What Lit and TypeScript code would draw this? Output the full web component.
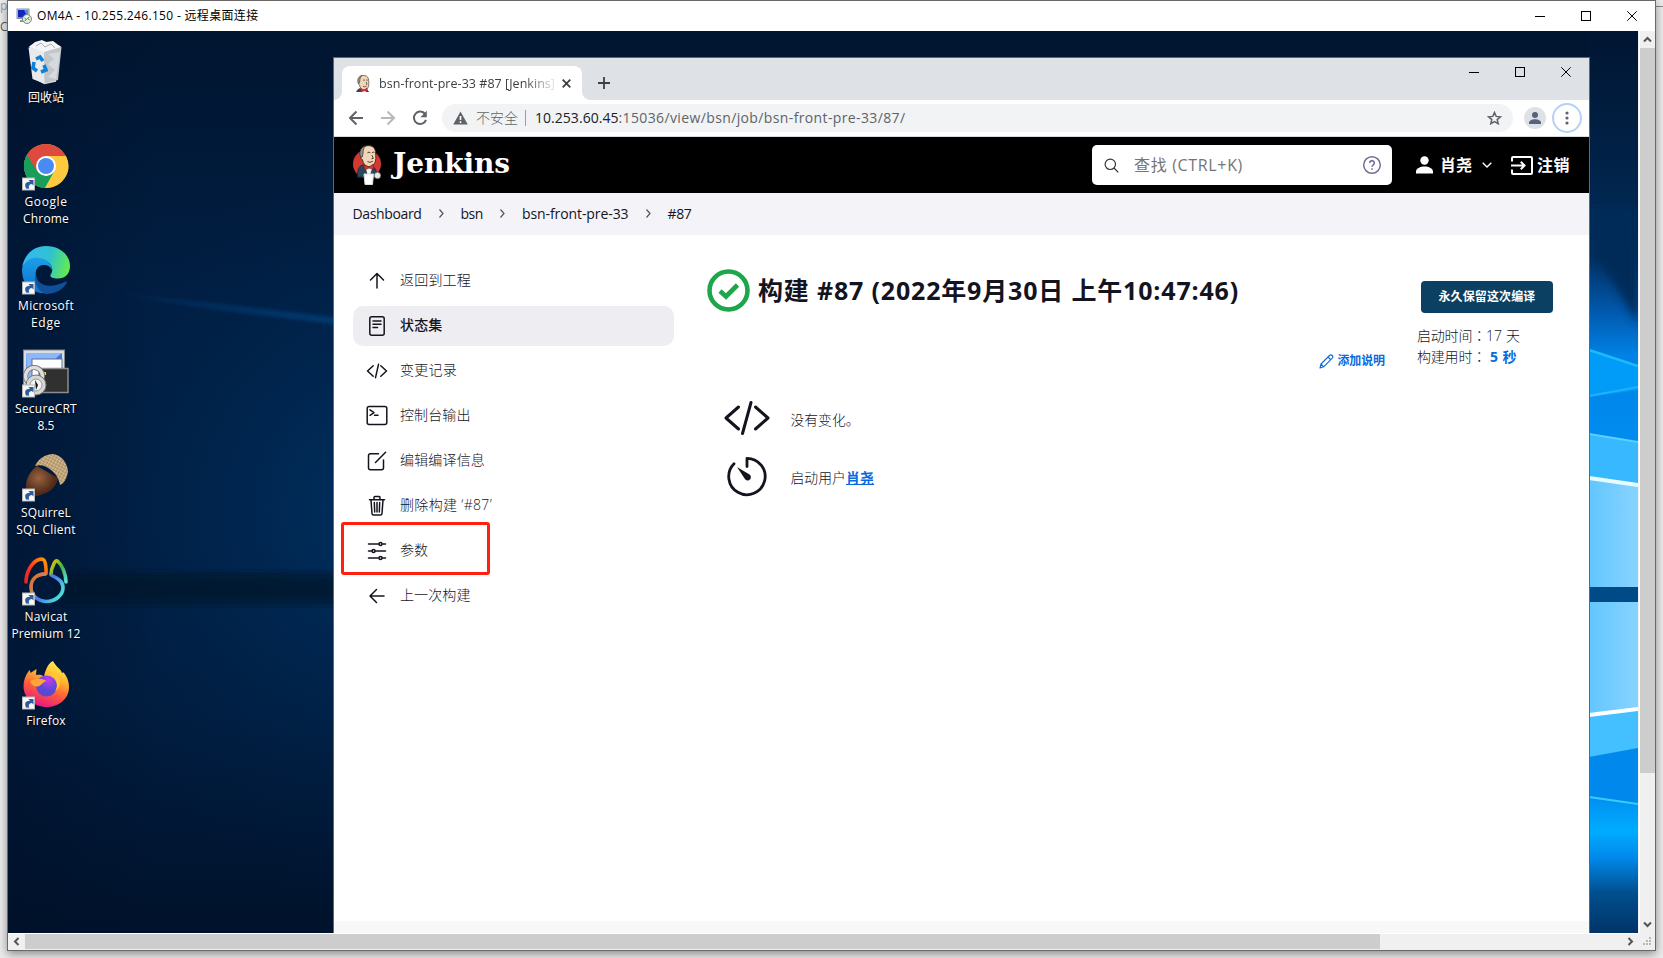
import { LitElement, html, svg, css } from "lit";

/** Single-line label whose letter spacing is tracked so that it spans a given width. */
class TrackedText extends LitElement {
  static properties = { text: {}, w: { type: Number } };
  declare text: string;
  declare w: number;
  static styles = css`
    :host { display: inline-block; white-space: pre; flex: none; text-decoration: inherit; }
    .run { display: inline-block; text-decoration: inherit; }
  `;
  updated() {
    const run = this.renderRoot.querySelector(".run") as HTMLElement;
    run.style.letterSpacing = "0px";
    const natural = run.getBoundingClientRect().width;
    const count = Array.from(this.text).length;
    const gap = (this.w - natural) / count;
    run.style.letterSpacing = `${gap}px`;
  }
  render() {
    return html`<span class="run">${this.text}</span>`;
  }
}
customElements.define("tracked-text", TrackedText);

const t = (text: string, w: number) => html`<tracked-text .text=${text} .w=${w}></tracked-text>`;

const butler = svg`
  <path d="M9 5.500C10 1.500 14 .3 18 .8c4.500.5 6.500 4 6.500 8 .5 4.500.5 8-1 11-1.500 2.600-4 4-6.500 3.700-4-.5-6.500-3.500-7-7.500-1.600-.6-2.400-2.500-1.800-4z" fill="#f0d6b7" stroke="#3a2d28" stroke-width="1"/>
  <path d="M8 13C5.500 8 8 2 14 .8 10.500 3 11 6.500 10.500 9.500L9.800 13z" fill="#9b938c" stroke="#3a2d28" stroke-width=".8"/>
  <path d="M15.500 8.500q1.800-1.500 3.300 0M20.500 8.300q1.600-1.300 2.900.2M20.500 11l1.500 3.500-2 .5M15.500 18q3 1.800 6-.3" stroke="#3a2d28" stroke-width="1" fill="none"/>
  <path d="M4.500 35C4 28 5.500 22.500 11 21.500l5 5 5-3c4 1.500 5 6 4.600 11.500z" fill="#29485c" stroke="#16222c" stroke-width=".8"/>
  <path d="M13 23.500l4 13 4-12z" fill="#f5f5f5"/>
  <path d="M11.500 21.500l5 2.600 5.500-3.300.8 5.600-5.600-1.300-5 2.200z" fill="#d33833" stroke="#701919" stroke-width=".7"/>`;

const shortcut = svg`
  <rect x="0.500" y="36" width="12" height="12" fill="#f7f7f7" stroke="#b9b9b9"/>
  <path d="M4 46.500c-2-5 0-7 4-6.500l-1.500-2h5v5.500l-1.600-1.400c-3 .3-3.400 2-2.700 4.600z" fill="#2c5c9e"/>`;

// Desktop glyphs share a 48x50 box.
const bin = svg`<g transform="translate(2 2)">
  <path d="M5.500 6.500 11 3l8-2 9 2 10 3.500-2.800 8L33 43 21 45.500 10 40z" fill="#d9dcdf" transform="scale(.97)"/>
  <path d="M4.500 7.500l15.500 4L20.500 43.500 8.500 39z" fill="#e8eaec"/>
  <path d="M20 11.500L37.500 7l-3.500 33-13.500 3.500z" fill="#c2c6ca"/>
  <path d="M24 14l6 5-6 5 7 6-7 7 8 2 4-27z" fill="#d7dadd"/>
  <path d="M5 7l6-5 7-2 4 2 7-1 8 6-17 5z" fill="#f4f5f6"/>
  <path d="M12 6l5-3 4 4 6-3 4 4" stroke="#aab0b5" fill="none"/>
  <path d="M12 19l4-2 3 4M20 25l2 5-5 2M13 31l-4-3 1-6" fill="none" stroke="#1081d8" stroke-width="3.600"/></g>`;
const chrome = svg`
  <circle cx="24" cy="24" r="22" fill="#fdc93f"/>
  <path d="M24 24 23 46A22 22 0 0 1 4.950 13z" fill="#189d5b"/>
  <path d="M4.950 13A22 22 0 0 1 43.050 13L44 14H24l-9.500 14.500z" fill="#dc4b3e"/>
  <path d="M4.950 13l9.500 16 9.500 5 8.800-5L23 46A22 22 0 0 1 4.950 13z" fill="#189d5b"/>
  <path d="M33 14H44A22 22 0 0 1 23 46l9.500-17z" fill="#fdc93f"/>
  <circle cx="24" cy="24" r="10" fill="#fff"/><circle cx="24" cy="24" r="8" fill="#4a8af4"/>`;
const edge = svg`
  <defs>
    <linearGradient id="ea" x1="0" y1=".4" x2="1" y2=".6"><stop offset="0" stop-color="#35b8f5"/><stop offset=".55" stop-color="#2fc3cd"/><stop offset="1" stop-color="#66eb4c"/></linearGradient>
    <linearGradient id="eb" x1="0" y1="0" x2="0" y2="1"><stop offset="0" stop-color="#1ba0e6"/><stop offset="1" stop-color="#0f6fd0"/></linearGradient>
  </defs>
  <path d="M0 22C2 8 12 0 24 0c14 0 24 9 24 20 0 8-5 12.500-12 12.500-6 0-9-2-7-4.500C33 22 27 13 17 13 9 13 2 17 0 22z" fill="url(#ea)"/>
  <path d="M0 23C3 13 12 10 18 12c8 1.500 12 7 12 12-2-4-5-5-8-5-7 0-9 6-8 11 1.500 9 9 15 18 14-5 3-11 4-16 2.500C6 45 0 36 0 23z" fill="url(#eb)"/>
  <path d="M14 27c0 9 7 14 17 12.500 6-.8 9-2.500 13-4 .8-.2 1.200.3.800 1C41 44 33 48 24 48 16 46 11 36 14 27z" fill="#10509b"/>`;
const crt = svg`
  <rect x="1.500" y="1" width="41" height="37" fill="#d9dce0" stroke="#858585"/>
  <rect x="4" y="4" width="36" height="32" fill="#3d78e0"/><path d="M4 4h36L5 34z" fill="#8db8f8"/>
  <rect x="10" y="10" width="30" height="24" fill="#fff" stroke="#5a6f96"/>
  <rect x="17" y="19.500" width="29" height="24" fill="#303030" stroke="#8d8d8d" stroke-width="1.500"/>
  <rect x="22" y="23" width="2" height="3" fill="#e8e020"/>
  <circle cx="12" cy="27" r="8.500" fill="none" stroke="#6d6d6d" stroke-width="5"/><circle cx="12" cy="27" r="8.500" fill="none" stroke="#dedede" stroke-width="3.500"/>
  <circle cx="14" cy="36" r="10" fill="#d6d6d6" stroke="#777"/><circle cx="14" cy="36" r="6" fill="#f2f2f2" stroke="#999"/><path d="M13 31l3 5-2 5z" fill="#111"/>`;
const acorn = svg`
  <defs><radialGradient id="ac" cx=".4" cy=".4"><stop offset="0" stop-color="#9a6240"/><stop offset="1" stop-color="#4f2c1a"/></radialGradient>
  <pattern id="cap" width="3" height="3" patternUnits="userSpaceOnUse" patternTransform="rotate(28)"><rect width="3" height="3" fill="#bfa277"/><rect width="1.500" height="1.500" fill="#dcc69c"/><rect x="1.500" y="1.500" width="1" height="1" fill="#84684a"/></pattern></defs>
  <g transform="translate(0 1)">
  <path d="M15 12c-7 5-12 14-11 23 1 7 9 9 17 5 8-2 14-9 15-16z" fill="url(#ac)"/>
  <path d="M13 12C16 5 23 0 31 0c8 1 14 8 15 17-.5 6-4 13-8 14-1-7-5-12-9-15-5-4-10-6-16-4z" fill="url(#cap)"/></g>`;
const navicat = svg`
  <defs>
    <linearGradient id="na" x1="0" y1="1" x2="1" y2="0"><stop offset="0" stop-color="#e8281c"/><stop offset=".4" stop-color="#ff3020"/><stop offset="1" stop-color="#ff9c00"/></linearGradient>
    <linearGradient id="nb" x1="0" y1="0" x2="1" y2="1"><stop offset="0" stop-color="#f2c500"/><stop offset=".5" stop-color="#3fb54a"/><stop offset="1" stop-color="#5ce0e0"/></linearGradient>
    <linearGradient id="nc" x1="0" y1="0" x2="1" y2=".6"><stop offset="0" stop-color="#e86a10"/><stop offset=".35" stop-color="#b88a70"/><stop offset=".55" stop-color="#4878f0"/><stop offset="1" stop-color="#4cd8d8"/></linearGradient>
  </defs>
  <g fill="none" stroke-width="3.600" stroke-linecap="round" stroke-linejoin="round">
    <path d="M4 25C4 15 10 5 17 2.500c5-1.500 6 1.500 6.500 5 .5 4 .8 6 .5 9-2 .8-5 .5-8 2" stroke="url(#na)"/>
    <path d="M44 25C44 17 40 8 36 4.500c-2-1.500-3 0-4 2-2 4-3 8-3 11" stroke="url(#nb)"/>
    <path d="M23 17c-8 0-14 5-14 13 0 8 6 14 15 14.500 9 0 17-6 17-14 0-6-5-9-11-12" stroke="url(#nc)"/>
  </g>`;
const firefox = svg`
  <defs>
    <linearGradient id="fa" x1=".75" y1="0" x2=".35" y2="1"><stop offset="0" stop-color="#fff44f"/><stop offset=".35" stop-color="#ffb52e"/><stop offset=".65" stop-color="#ff5a3c"/><stop offset="1" stop-color="#e31587"/></linearGradient>
    <radialGradient id="fb" cx=".6" cy=".2"><stop offset="0" stop-color="#c43af0"/><stop offset="1" stop-color="#5b49d6"/></radialGradient>
  </defs>
  <path d="M31 0c3 6 8 8 9 12 2-1 2 0 2 0 4 5 5 10 5 14 0 12-10 20-22.500 20S1.500 37 1.500 25c0-6 2-11 6-16 1 2 1 3 1 3l6-4-.5 6c4-.5 6 0 8 1.500C23 11 25 3 31 0z" fill="url(#fa)"/>
  <circle cx="24.500" cy="25" r="10.500" fill="url(#fb)"/>
  <path d="M8 20c6-3 12-3 16.500 0-4 1-5 5-9 5.500-4 0-6-2-7.500-5.500z" fill="#ffa436"/>
  <path d="M28 14c7 3 9 11 5 16 6-3 7-12 1-17z" fill="#ffc637"/>`;

const shortcuts = [
  { glyph: bin, arrow: false, lines: [["回收站", 36]] },
  { glyph: chrome, arrow: true, lines: [["Google", 43], ["Chrome", 46]] },
  { glyph: edge, arrow: true, lines: [["Microsoft", 56], ["Edge", 30]] },
  { glyph: crt, arrow: true, lines: [["SecureCRT", 62], ["8.5", 17]] },
  { glyph: acorn, arrow: true, lines: [["SQuirreL", 50], ["SQL Client", 59.5]] },
  { glyph: navicat, arrow: true, lines: [["Navicat", 43], ["Premium 12", 69]] },
  { glyph: firefox, arrow: true, lines: [["Firefox", 39.5]] },
] as const;

// Side-panel glyphs are drawn in a 24x24 box.
const code = svg`<path d="M8.200 6.800 2.500 12l5.700 5.200M15.800 6.800l5.700 5.200-5.700 5.200M13.500 5.300l-3 13.400"/>`;
const tasks = [
  { text: "返回到工程", w: 71, icon: svg`<path d="M12 19V5M5.500 11 12 4.500l6.500 6.500"/>` },
  { text: "状态集", w: 42.5, active: true, icon: svg`<rect x="4.800" y="2.800" width="14.400" height="18.400" rx="2"/><path d="M8 7h8M8 10.300h8M8 13.500h4.500"/>` },
  { text: "变更记录", w: 57, icon: code },
  { text: "控制台输出", w: 70.5, icon: svg`<rect x="2.200" y="2.600" width="19.600" height="18" rx="2"/><path d="M5 5.800l4 2.800-4 2.700M9.500 11.300h3.500"/>` },
  { text: "编辑编译信息", w: 85, icon: svg`<path d="M13.500 4.700H5.500a2 2 0 0 0-2 2v12a2 2 0 0 0 2 2h11a2 2 0 0 0 2-2V11M10.500 13.500 20.600 3.200"/>` },
  { text: "删除构建 ‘#87’", w: 92, icon: svg`<path d="M4.500 5.800h15M9 5.500V3.600a1 1 0 0 1 1-1h4a1 1 0 0 1 1 1v1.900M6 6l1 13.500a1.600 1.600 0 0 0 1.600 1.500h6.800a1.600 1.600 0 0 0 1.600-1.500L18 6M9.300 8.500l.4 9.500M12 8.500V18M14.700 8.500l-.4 9.500"/>` },
  { text: "参数", w: 28, icon: svg`<path d="M3.500 5h10.200M17.300 5H20.500M3.500 12h3.200M10.300 12h10.200M3.500 19h10.200M17.300 19H20.500"/><circle cx="15.500" cy="5" r="1.500"/><circle cx="8.500" cy="12" r="1.500"/><circle cx="15.500" cy="19" r="1.500"/>` },
  { text: "上一次构建", w: 70.5, icon: svg`<path d="M19 12H5.500M11.500 5.500 5 12l6.500 6.500"/>` },
];

const minimize = svg`<path d="M0 5.500h10"/>`;
const maximize = svg`<rect x=".5" y=".5" width="9" height="9"/>`;
const close = svg`<path d="M.3.300l9.400 9.400M9.700.300.300 9.700"/>`;

class AppRoot extends LitElement {
  static styles = css`
    :host {
      display: block; position: relative; width: 1663px; height: 958px; overflow: hidden;
      background: #ececec; color: #14141f;
      font: 14px/20px "Open Sans", "Noto Sans CJK SC", sans-serif;
    }
    * { box-sizing: border-box; }
    svg { display: block; flex: none; }
    .behind { position: absolute; left: 0; top: -5px; font-size: 12px; line-height: 21px; color: #555; }
    .behind .pale { color: #8fa0b8; }
    .behind-edge { position: absolute; right: 0; top: 6px; width: 8px; height: 1px; background: #888; }
    .remote {
      position: absolute; left: 7px; top: 0; width: 1649px; height: 951px;
      display: grid; grid-template: 30px 902px 17px / 1631px 16px;
      background: #f0f0f0; border: 1px solid #6c6868; box-shadow: 0 3px 9px rgba(0,0,0,.42);
    }
    .titlebar { grid-column: 1 / 3; display: flex; align-items: center; background: #fff; color: #000; font-size: 12px; padding: 0 13px 0 8px; gap: 5px; }
    .grow { flex: 1; }
    .controls { display: flex; align-items: center; gap: 36px; fill: none; stroke: #000; stroke-width: 1; }
    .titlebar .controls { padding-right: 5px; padding-bottom: 1px; }
    .desktop { position: relative; overflow: hidden; width: 1630px; height: 902px; background: #001a3c; }
    .wall { position: absolute; inset: 0; }
    .icons { position: relative; display: grid; grid-auto-rows: 103.800px; width: 76px; padding-top: 7px; }
    .shortcut { display: flex; flex-direction: column; align-items: center; color: #fff; font-size: 12px; line-height: 17px; text-shadow: 0 1px 2px #000; gap: 1px; }
    .names { display: flex; flex-direction: column; align-items: center; }
    .vbar { display: flex; flex-direction: column; align-items: center; justify-content: space-between; border-left: 1px solid #fff; }
    .vthumb { width: 15px; height: 725px; background: #cdcdcd; }
    .vbar .arrow { height: 17px; }
    .hbar { display: flex; align-items: flex-start; border-top: 1px solid #fff; }
    .hthumb { width: 1355px; height: 15px; background: #cdcdcd; }
    .arrow { display: grid; place-items: center; width: 17px; height: 15px; fill: none; stroke: #555; stroke-width: 2; }
    .rest { flex: none; height: 143px; }
    .browser { position: absolute; left: 325px; top: 26px; width: 1257px; height: 880px; border: 1px solid #1e78c4; background: #fff; display: flex; flex-direction: column; }
    .strip { height: 42px; flex: none; background: #dee1e6; display: flex; padding: 0 18px 0 8px; }
    .tab { position: relative; margin-top: 8px; width: 240px; height: 34px; border-radius: 8px 8px 0 0; background: #fff; display: flex; align-items: center; padding: 0 11px 0 12px; font-size: 12.500px; color: #3c4043; }
    .tab::before, .tab::after { content: ""; position: absolute; bottom: 0; width: 8px; height: 8px; }
    .tab::before { left: -8px; background: radial-gradient(circle at 0 0, #dee1e6 7.600px, #fff 8px); }
    .tab::after { right: -8px; background: radial-gradient(circle at 100% 0, #dee1e6 7.600px, #fff 8px); }
    .fade { margin-left: 7px; padding-top: 1px; width: 175px; overflow: hidden; -webkit-mask-image: linear-gradient(90deg, #000 145px, transparent 180px); }
    .line { fill: none; stroke: #3c4043; stroke-width: 1.800; }
    .plus { margin: 19px 0 0 16px; }
    .strip .controls { height: 28px; gap: 36px; }
    .toolbar { height: 37px; flex: none; display: flex; align-items: center; border-bottom: 1px solid #dadce0; padding: 0 7px 0 14px; }
    .nav { display: flex; gap: 16px; fill: none; stroke: #5f6368; stroke-width: 2; }
    .off { stroke: #b6b9bc; }
    .omnibox { margin-left: 14px; width: 1072px; height: 28px; border-radius: 14px; background: #f1f3f4; display: flex; align-items: center; padding: 0 11px; color: #5f6368; font-size: 14px; }
    .sep { width: 1px; height: 16px; background: #9a9ea3; margin: 0 9px 0 7px; }
    .unsafe { margin-left: 8px; font-weight: 300; }
    .host { color: #202124; }
    .avatar { margin-left: 11px; width: 22px; height: 22px; border-radius: 50%; background: #dee1e6; display: grid; place-items: center; }
    .menu { margin-left: 6px; width: 30px; height: 30px; border-radius: 50%; border: 2px solid #b4d1f8; display: grid; place-items: center; }
    .header { height: 56px; flex: none; background: #000; display: flex; align-items: center; padding: 0 19px 0 17px; color: #fff; font-weight: 700; font-size: 16px; }
    .brand { font: 700 28px/40px "DejaVu Serif", serif; margin: -3px 0 0 11px; }
    .search { width: 300px; height: 40px; border-radius: 5px; background: #fff; color: #757575; font-weight: 400; display: flex; align-items: center; padding: 0 10px 0 12px; }
    .search tracked-text { margin-left: 15px; }
    .user { margin: 0 10px 0 7px; }
    .person { margin-left: 24px; }
    .logout { margin: 0 4px 0 19px; }
    .crumbs { height: 42px; flex: none; background: #f3f3f8; display: flex; align-items: center; gap: 17px; padding: 0 0 1px 18.500px; }
    .crumbs svg { fill: none; stroke: #555; stroke-width: 1.200; }
    .page { flex: 1; display: flex; }
    .light { font-weight: 300; }
    .tasks { width: 340px; padding: 26px 0 0 19px; display: flex; flex-direction: column; gap: 5px; }
    .task { width: 321px; height: 40px; border-radius: 10px; display: flex; align-items: center; gap: 11px; padding-left: 12px; fill: none; stroke: #14141f; stroke-width: 1.500; stroke-linecap: round; stroke-linejoin: round; }
    .task tracked-text { padding-bottom: 2px; }
    .active { background: #eeedf2; font-weight: 500; }
    .main { width: 650px; padding: 33px 0 0 33px; }
    h1 { margin: 0; display: flex; align-items: center; gap: 8px; height: 44px; font-size: 25px; line-height: 44px; font-weight: 700; }
    h1 tracked-text { margin-top: -1px; }
    .describe { display: flex; justify-content: flex-end; align-items: center; gap: 4px; height: 20px; margin-top: 39px; color: #0b6adb; font-size: 12px; font-weight: 700; width: 678px; }
    .facts { display: grid; grid-template-columns: 44px auto; column-gap: 22.500px; align-items: center; grid-auto-rows: 58px; justify-content: start; margin: 18px 0 0 17px; font-size: 13.800px; }
    .facts svg { fill: none; stroke: #14141f; stroke-linecap: round; stroke-linejoin: round; }
    .fact { display: flex; padding-top: 3px; }
    .link { color: #0b6adb; font-weight: 700; text-decoration: underline; }
    .aside { padding: 46px 0 0 93px; display: flex; flex-direction: column; }
    .keep { width: 132px; height: 32px; margin: 0 0 12px 4px; border: 0; border-radius: 4px; background: #0b4062; color: #fff; font: 700 12px/32px "Open Sans", "Noto Sans CJK SC", sans-serif; padding: 0; text-align: center; }
    .stat { display: flex; height: 21px; line-height: 21px; font-family: "Open Sans", "Noto Sans CJK TC", sans-serif; }
    .blue { color: #0b6adb; font-weight: 700; margin-left: 4px; }
    .footer { height: 22px; flex: none; background: #f8f8f8; margin-bottom: -7px; }
    .callout { position: absolute; left: 7px; top: 464px; width: 149px; height: 53px; border: 3px solid #ff2010; border-radius: 3px; }
  `;

  controls() {
    return html`<div class="controls">${[minimize, maximize, close].map((g) => html`<svg width="10" height="10">${g}</svg>`)}</div>`;
  }

  wallpaper() {
    return html`<svg class="wall" width="1630" height="902" viewBox="8 31 1630 902">
      <defs>
        <radialGradient id="glow" gradientUnits="userSpaceOnUse" cx="400" cy="510" r="400"><stop offset="0" stop-color="#003263"/><stop offset=".5" stop-color="#00264f" stop-opacity=".65"/><stop offset="1" stop-color="#001a3a" stop-opacity="0"/></radialGradient>
        <linearGradient id="base" x1="0" y1="0" x2="0" y2="1"><stop offset="0" stop-color="#001530"/><stop offset=".3" stop-color="#001f44"/><stop offset=".55" stop-color="#001f45"/><stop offset=".75" stop-color="#001d40"/><stop offset="1" stop-color="#00122b"/></linearGradient>
        <linearGradient id="left" x1="0" y1="0" x2="1" y2="0"><stop offset="0" stop-color="#000f28" stop-opacity=".45"/><stop offset="1" stop-color="#001028" stop-opacity="0"/></linearGradient>
        <linearGradient id="beam" x1="0" y1="0" x2="1" y2="0"><stop offset="0" stop-color="#00407c" stop-opacity="0"/><stop offset="1" stop-color="#00407c" stop-opacity=".75"/></linearGradient>
        <linearGradient id="sky" x1="0" y1="0" x2="0" y2="1"><stop offset="0" stop-color="#001632"/><stop offset=".15" stop-color="#002248"/><stop offset=".25" stop-color="#003060"/><stop offset=".31" stop-color="#0058ac"/><stop offset=".36" stop-color="#0082e6"/><stop offset=".5" stop-color="#0092f4"/></linearGradient>
        <linearGradient id="fall" x1="0" y1="0" x2="0" y2="1"><stop offset="0" stop-color="#0090f0"/><stop offset=".25" stop-color="#00acff"/><stop offset=".45" stop-color="#0088ea"/><stop offset=".7" stop-color="#00508f"/><stop offset="1" stop-color="#003468"/></linearGradient>
        <linearGradient id="pane" x1="0" y1="0" x2="1" y2="0"><stop offset="0" stop-color="#62c6ff"/><stop offset="1" stop-color="#88d3ff"/></linearGradient>
        <filter id="soft"><feGaussianBlur stdDeviation="5"/></filter>
        <filter id="haze" x="-.1" y="-1" width="1.200" height="3"><feGaussianBlur stdDeviation="1.500"/></filter>
      </defs>
      <rect x="8" y="31" width="1630" height="902" fill="url(#base)"/>
      <rect x="8" y="31" width="500" height="902" fill="url(#glow)"/>
      <path d="M100 292l100 9 140 17v7l-140-17z" fill="url(#beam)" filter="url(#haze)"/>
      <rect x="60" y="573" width="280" height="31" fill="#00122c" opacity=".75" filter="url(#soft)"/>
      <rect x="8" y="31" width="150" height="902" fill="url(#left)"/>
      <g>
        <rect x="1589" y="31" width="49" height="902" fill="url(#sky)"/>
        <path d="M1589 250q25 30 49 75V210h-49z" fill="#002a58" filter="url(#soft)"/>
        <path d="M1589 349l49 17v24l-49 7z" fill="#009cf8"/>
        <path d="M1589 396l49-9" stroke="#20b0ff" stroke-width="2"/><path d="M1589 350l49 16" stroke="#20b8ff" stroke-width="2.500"/>
        <path d="M1589 434l49 8v46l-49-8z" fill="#38b8ff"/><path d="M1589 434l49 8" stroke="#5cd0ff" stroke-width="2"/>
        <path d="M1589 478l49 7v102h-49z" fill="url(#pane)"/><path d="M1589 478l49 7" stroke="#e8fbff" stroke-width="4"/>
        <rect x="1589" y="587" width="49" height="15" fill="#004a88"/>
        <rect x="1589" y="602" width="49" height="160" fill="url(#pane)"/>
        <path d="M1589 714l49-6v42l-49 8z" fill="#44bfff"/><path d="M1589 715l49-6" stroke="#fff" stroke-width="4"/>
        <path d="M1589 757l49-9v60h-49z" fill="#0088ec"/>
        <path d="M1589 797l49 7v129h-49z" fill="url(#fall)"/>
        <path d="M1589 797l49 7" stroke="#38ccff" stroke-width="2"/>
      </g>
    </svg>`;
  }

  chevron() {
    return html`<svg width="5" height="9"><path d="M.5.500l3.500 4-3.500 4"/></svg>`;
  }

  browser() {
    return html`<div class="browser">
      <div class="strip">
        <div class="tab">
          <svg width="18" height="17" viewBox="2 0 27 27">${butler}</svg>
          <div class="fade">${t("bsn-front-pre-33 #87 [Jenkins]", 176)}</div>
          <div class="grow"></div>
          <svg class="line" width="9" height="9"><path d="M.7.700l7.600 7.600M8.300.700.700 8.300"/></svg>
        </div>
        <svg class="line plus" width="12" height="12"><path d="M6 0v12M0 6h12"/></svg>
        <div class="grow"></div>
        ${this.controls()}
      </div>
      <div class="toolbar">
        <div class="nav">
          <svg width="16" height="16"><path d="M15 8H2M8.500 1.500 2 8l6.500 6.500"/></svg>
          <svg class="off" width="16" height="16"><path d="M1 8h13M7.500 1.500 14 8l-6.500 6.500"/></svg>
          <svg width="16" height="16"><path d="M13.200 4.200A6.200 6.200 0 1 0 14 9.800"/><path d="M14.800.800v6.400H8.400z" fill="#5f6368" stroke="none"/></svg>
        </div>
        <div class="omnibox">
          <svg width="15" height="14"><path d="M7.500.5 14.800 13.500H.2z" fill="#5f6368"/><path d="M7.500 5v4M7.500 10.200v1.700" stroke="#fff" stroke-width="1.600"/></svg>
          <span class="unsafe">${t("不安全", 42)}</span>
          <span class="sep"></span>
          <span class="host">${t("10.253.60.45", 83.5)}</span>${t(":15036/view/bsn/job/bsn-front-pre-33/87/", 287)}
          <div class="grow"></div>
          <svg width="15" height="14" viewBox="0 0 15 14" fill="none" stroke="#5f6368" stroke-width="1.500"><path d="M7.500 1.500l1.700 3.900 4.200.4-3.200 2.800 1 4.100-3.700-2.200-3.700 2.200 1-4.100L1.600 5.800l4.200-.4z"/></svg>
        </div>
        <div class="avatar"><svg width="12" height="12" fill="#56637a"><circle cx="6" cy="3" r="3"/><path d="M0 12V10.500C0 8.500 3 7.200 6 7.200s6 1.300 6 3.300V12z"/></svg></div>
        <div class="menu"><svg width="4" height="14" fill="#5f6368"><circle cx="2" cy="2" r="1.600"/><circle cx="2" cy="7" r="1.600"/><circle cx="2" cy="12" r="1.600"/></svg></div>
      </div>
      <div class="header">
        <svg width="31" height="42" viewBox="0 0 31 42"><circle cx="16" cy="20" r="14" fill="#d33833"/><g transform="translate(2.500 1) scale(.9 .92)">${butler}</g><path d="M13 30h9.500l-1 10.500h-7.500z" fill="#fff" stroke="#ddd"/><circle cx="26.500" cy="31.500" r="3.200" fill="#e8e8e8" stroke="#555" stroke-width=".6"/></svg>
        <span class="brand">${t("Jenkins", 117)}</span>
        <div class="grow"></div>
        <div class="search">
          <svg width="15" height="15" fill="none" stroke="#333" stroke-width="1.200"><circle cx="6.300" cy="6.300" r="5.200"/><path d="M10 10l4.300 4.300"/></svg>
          ${t("查找 (CTRL+K)", 109)}
          <div class="grow"></div>
          <svg width="20" height="20" fill="none" stroke="#736f98" stroke-width="1.500"><circle cx="10" cy="10" r="8.300"/><path d="M7.700 8a2.300 2.300 0 1 1 3.600 1.900c-.9.600-1.300 1-1.300 1.900M10 13.200v1.500" stroke-width="1.600"/></svg>
        </div>
        <svg class="person" width="17" height="18" fill="#fff"><circle cx="8.500" cy="4.500" r="4.200"/><path d="M0 17.500V15.500c0-3 4.200-5 8.500-5s8.500 2 8.500 5v2z"/></svg>
        <span class="user">${t("肖尧", 32)}</span>
        <svg width="10" height="6" fill="none" stroke="#fff" stroke-width="1.400"><path d="M.7.700 5 5 9.300.700"/></svg>
        <svg class="logout" width="22" height="19" fill="none" stroke="#fff" stroke-width="2"><path d="M1 5.500V2a1 1 0 0 1 1-1h18a1 1 0 0 1 1 1v15a1 1 0 0 1-1 1H2a1 1 0 0 1-1-1v-3.500M0 9.500h13M9.800 5.800l3.700 3.700-3.700 3.700" /></svg>
        ${t("注销", 33)}
      </div>
      <div class="crumbs">
        ${t("Dashboard", 69)}${this.chevron()}
        ${t("bsn", 22.5)}${this.chevron()}
        ${t("bsn-front-pre-33", 106.5)}${this.chevron()}
        ${t("#87", 24)}
      </div>
      <div class="page">
        <div class="tasks light">
          ${tasks.map((k) => html`<div class="task ${k.active ? "active" : ""}"><svg width="24" height="24">${k.icon}</svg>${t(k.text, k.w)}</div>`)}
        </div>
        <div class="main">
          <h1>
            <svg width="43" height="43" fill="none" stroke="#1ea64b"><circle cx="21.500" cy="21.500" r="19" stroke-width="4.600"/><path d="M13 22l6 5.500L30.500 16" stroke-width="4.600"/></svg>
            ${t("构建 #87 (2022年9月30日 上午10:47:46)", 481)}
          </h1>
          <div class="describe">
            <svg width="15" height="15" fill="none" stroke="#0b6adb" stroke-width="1.100" stroke-linejoin="round"><path d="M1 14l1-4L10.500 1.500a1.700 1.700 0 0 1 2.700 2.700L4.700 12.800zM9 3l3 3M2 10l2.700 2.800"/></svg>
            ${t("添加说明", 47.5)}
          </div>
          <div class="facts light">
            <svg width="46" height="36" stroke-width="3"><path d="M14.500 7 2 18l12.500 11M31.500 7 44 18 31.500 29M27 2.500l-8.500 31"/></svg>
            <div class="fact">${t("没有变化。", 69)}</div>
            <svg width="44" height="42" viewBox="-1 -.5 44 42" stroke-width="2.800"><path d="M22 11V2.800A18.200 18.200 0 1 1 9 8.200"/><path d="M12 11.500l12.500 7.500a3.300 3.300 0 1 1-4.600 4.600z" fill="#14141f" stroke="none"/></svg>
            <div class="fact">${t("启动用户", 55.5)}<span class="link">${t("肖尧", 28)}</span></div>
          </div>
        </div>
        <div class="aside light">
          <button class="keep">${t("永久保留这次编译", 97)}</button>
          <div class="stat">${t("启动时间：", 69)}${t("17 天", 34)}</div>
          <div class="stat">${t("构建用时：", 69)}<span class="blue">${t("5 秒", 27)}</span></div>
        </div>
      </div>
      <div class="footer"></div>
      <div class="callout"></div>
    </div>`;
  }

  render() {
    return html`
      <div class="behind"><span class="pale">p</span><br />C</div>
      <div class="behind-edge"></div>
      <div class="remote">
        <div class="titlebar">
          <svg width="16" height="16"><rect x="1" y="1" width="12" height="9.500" fill="#c9ced8" stroke="#8a93a3"/><rect x="2" y="2" width="10" height="7.500" fill="#1226c0"/><path d="M8 2h4v7.500z" fill="#5a86e8"/><path d="M4 13h6" stroke="#8a93a3" stroke-width="2"/><circle cx="11" cy="11" r="4.500" fill="#e8efe4" stroke="#7d8a78"/><path d="M8.500 10l2 1.500-2 1.500M13.500 9l-2 1.500 2 1.500" fill="none" stroke="#1f9a2c"/></svg>
          ${t("OM4A - 10.255.246.150 - 远程桌面连接", 221.5)}
          <div class="grow"></div>
          ${this.controls()}
        </div>
        <div class="desktop">
          ${this.wallpaper()}
          <div class="icons">
            ${shortcuts.map((s) => html`<div class="shortcut">
              <svg width="48" height="50">${s.glyph}${s.arrow ? shortcut : ""}</svg>
              <div class="names">${s.lines.map(([text, w]) => t(text, w))}</div>
            </div>`)}
          </div>
          ${this.browser()}
        </div>
        <div class="vbar">
          <div class="arrow"><svg width="9" height="7"><path d="M1 5.500 4.500 2 8 5.500"/></svg></div>
          <div class="vthumb"></div>
          <div class="rest"></div>
          <div class="arrow"><svg width="9" height="7"><path d="M1 1.500 4.500 5 8 1.500"/></svg></div>
        </div>
        <div class="hbar">
          <div class="arrow"><svg width="7" height="9"><path d="M5.500 1 2 4.500 5.500 8"/></svg></div>
          <div class="hthumb"></div>
          <div class="grow"></div>
          <div class="arrow"><svg width="7" height="9"><path d="M1.500 1 5 4.500 1.500 8"/></svg></div>
        </div>
        <svg width="16" height="16" fill="#b8b8b8"><path d="M10 4h2v2h-2zM10 7h2v2h-2zM10 10h2v2h-2zM7 7h2v2H7zM7 10h2v2H7zM4 10h2v2H4z"/></svg>
      </div>`;
  }
}
customElements.define("app-root", AppRoot);
